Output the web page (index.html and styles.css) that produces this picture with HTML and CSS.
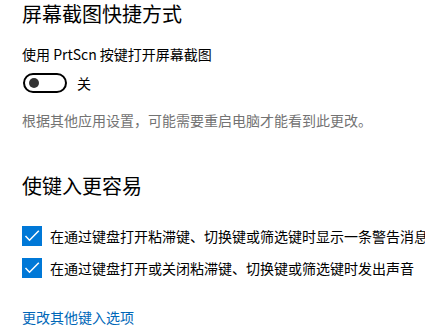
FILE: index.html
```html
<!DOCTYPE html>
<html lang="zh-CN">
<head>
    <meta charset="UTF-8">
    <title>屏幕截图快捷方式</title>
    <link rel="stylesheet" href="styles.css">
</head>
<body>
    <div class="page">
        <h2 class="section-title">屏幕截图快捷方式</h2>
        <div class="setting-label">使用 PrtScn 按键打开屏幕截图</div>
        <div class="toggle-row">
            <div class="toggle"><span class="knob"></span></div>
            <span class="toggle-state">关</span>
        </div>
        <p class="hint">根据其他应用设置，可能需要重启电脑才能看到此更改。</p>

        <h2 class="section-title second">使键入更容易</h2>
        <div class="check-row first">
            <span class="checkbox">
                <svg width="20" height="20" viewBox="0 0 20 20"><polyline points="3.5,10 7.5,14.2 16.8,4.8" fill="none" stroke="#fff" stroke-width="1.5"/></svg>
            </span>
            <span class="check-text">在通过键盘打开粘滞键、切换键或筛选键时显示一条警告消息</span>
        </div>
        <div class="check-row">
            <span class="checkbox">
                <svg width="20" height="20" viewBox="0 0 20 20"><polyline points="3.5,10 7.5,14.2 16.8,4.8" fill="none" stroke="#fff" stroke-width="1.5"/></svg>
            </span>
            <span class="check-text">在通过键盘打开或关闭粘滞键、切换键或筛选键时发出声音</span>
        </div>
        <a href="#" class="more-link">更改其他键入选项</a>
    </div>
</body>
</html>
```

FILE: styles.css
```css
body {
    margin: 0;
    background: #fff;
    font-family: 'Noto Sans CJK SC', 'Noto Sans', sans-serif;
    color: #000;
    overflow: hidden;
}

.page {
    padding-left: 22px;
    display: flex;
    flex-direction: column;
    align-items: flex-start;
    white-space: nowrap;
}

.section-title {
    margin: 0;
    font-size: 20px;
    font-weight: 400;
    line-height: 28px;
}

.section-title.second {
    margin-top: 42px;
}

.setting-label {
    margin-top: 16px;
    font-size: 14px;
    line-height: 20px;
}

/* Toggle switch */
.toggle-row {
    display: flex;
    align-items: center;
    margin-top: 9px;
}

.toggle {
    width: 44px;
    height: 20px;
    box-sizing: border-box;
    border: 2px solid #000;
    border-radius: 10px;
    display: flex;
    align-items: center;
    padding: 0 4px;
    margin-left: 1px;
}

.knob {
    width: 10px;
    height: 10px;
    border-radius: 50%;
    background: #333;
}

.toggle-state {
    margin-left: 10px;
    font-size: 14px;
    line-height: 20px;
}

.hint {
    margin: 17px 0 0;
    font-size: 14px;
    line-height: 20px;
    color: #737373;
}

/* Checkboxes */
.check-row {
    display: flex;
    align-items: center;
    gap: 8px;
    margin-top: 12px;
}

.check-row.first {
    margin-top: 26px;
}

.checkbox {
    width: 20px;
    height: 20px;
    background: #0078d7;
    display: flex;
}

.check-text {
    font-size: 14px;
    line-height: 20px;
}

.more-link {
    margin-top: 29px;
    font-size: 14px;
    line-height: 20px;
    color: #0067b8;
    text-decoration: none;
}
```
